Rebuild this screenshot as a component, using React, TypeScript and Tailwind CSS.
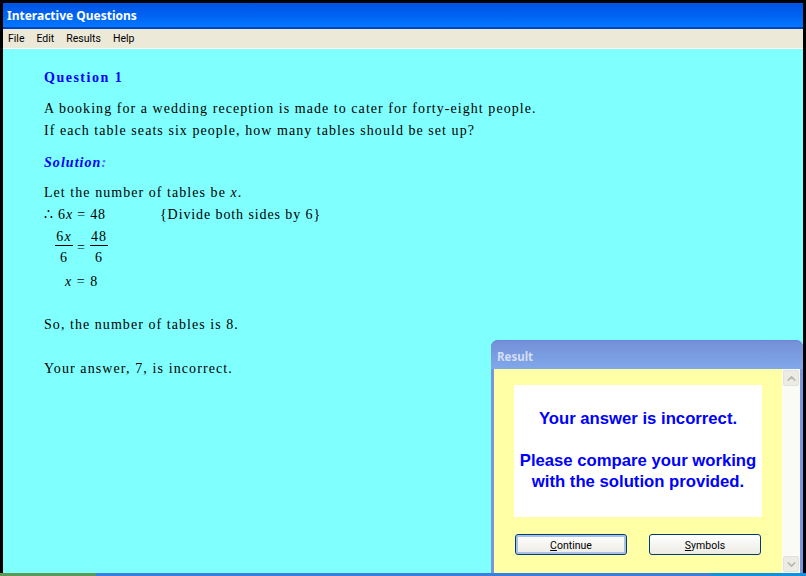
import React from "react";
import { ChevronUp, ChevronDown } from "lucide-react";

const serif = "font-['Liberation_Serif',serif]";
const ui = "font-['Roboto',sans-serif]";

const Fraction = ({ top, bottom }: { top: React.ReactNode; bottom: React.ReactNode }) => {
  return (
    <span className="flex w-[18px] flex-col items-center">
      <span className="flex h-[18px] items-center">{top}</span>
      <span className="h-px w-full bg-black"></span>
      <span className="flex h-[22px] items-center">{bottom}</span>
    </span>
  );
};

const ScrollButton = ({ children }: { children: React.ReactNode }) => {
  return (
    <div className="flex h-[16px] w-[16px] items-center justify-center rounded-[2px] border border-[#e2e2da] bg-[#ecece4] text-[#b8b8ae]">
      {children}
    </div>
  );
};

const DialogButton = ({ label, rest, focused }: { label: string; rest: string; focused?: boolean }) => {
  return (
    <button
      className={`flex h-[21px] w-[112px] items-center justify-center rounded-[3px] border border-[#003c74] bg-gradient-to-b from-white to-[#ecebe5] pt-[2px] text-[10.5px] text-black ${ui} ${focused ? "shadow-[inset_0_0_0_2px_#a9c1ea]" : ""}`}
    >
      <span className="underline">{label}</span>
      {rest}
    </button>
  );
};

const ResultDialog = () => {
  return (
    <div className="absolute left-[488px] top-[291px] flex h-[233px] w-[312px] flex-col rounded-t-[7px] bg-[#7b94dc] tracking-normal">
      <div className="flex h-[29px] items-center rounded-t-[7px] border-t border-[#6c86dc] bg-gradient-to-b from-[#7490d8] to-[#80a8ea] px-[6px] pt-[3px] font-['Noto_Sans',sans-serif] text-[11.5px] font-bold text-[#d4def6]">
        Result
      </div>
      <div className="ml-[3px] mr-[3px] flex flex-1 bg-[#ffffa6]">
        <div className="flex flex-1 flex-col items-center pt-[16px]">
          <div className="flex h-[132px] w-[248px] flex-col items-center justify-center bg-white pb-[2px] text-center font-['Liberation_Sans',sans-serif] text-[16.7px] font-bold leading-[21px] text-[#0000ff]">
            <p>Your answer is incorrect.</p>
            <p className="h-[21px]"></p>
            <p>Please compare your working</p>
            <p>with the solution provided.</p>
          </div>
          <div className="mt-[17px] flex w-[246px] justify-between">
            <DialogButton label="C" rest="ontinue" focused />
            <DialogButton label="S" rest="ymbols" />
          </div>
        </div>
        <div className="flex w-[18px] flex-col justify-between bg-[#fbfbf5] pb-[1px] pl-[1px] pt-[1px]">
          <ScrollButton><ChevronUp size={13} strokeWidth={3} /></ScrollButton>
          <ScrollButton><ChevronDown size={13} strokeWidth={3} /></ScrollButton>
        </div>
      </div>
    </div>
  );
};

const App = () => {
  return (
    <div className="flex h-[576px] w-[806px] flex-col overflow-hidden bg-black pl-[3px] pr-[3px] pt-[3px]">
      <div className="flex h-[26px] items-center border-b-2 border-[#0044c4] bg-gradient-to-b from-[#0054e3] via-[#0062f2] to-[#0078ff] px-[4px] pt-[1px] font-['Noto_Sans',sans-serif] text-[12px] font-bold text-white">
        Interactive Questions
      </div>
      <div className={`flex h-[19px] items-center gap-[12px] bg-[#ece9d8] px-[5px] pt-[1px] text-[10.5px] text-black ${ui}`}>
        <span>File</span>
        <span>Edit</span>
        <span>Results</span>
        <span>Help</span>
      </div>
      <div className="h-px bg-white"></div>
      <div className={`relative flex flex-1 flex-col bg-[#80ffff] pl-[41px] pt-[20px] text-[14px] tracking-[1.05px] text-black ${serif}`}>
        <p className="flex h-[16px] items-center font-bold tracking-[1.5px] text-[#0000ff]">Question 1</p>
        <p className="mt-[12px] flex h-[22px] items-center">A booking for a wedding reception is made to cater for forty-eight people.</p>
        <p className="flex h-[22px] items-center">If each table seats six people, how many tables should be set up?</p>
        <p className="mt-[10px] flex h-[22px] items-center font-bold italic text-[#0000ff]">Solution<span className="text-[#4c6cff]">:</span></p>
        <p className="mt-[8px] flex h-[22px] items-center whitespace-pre">Let the number of tables be <i>x</i>.</p>
        <div className="flex h-[22px] items-center whitespace-pre">
          <span className="w-[116px] tracking-[0.8px]">∴ 6<i>x</i> = 48</span>
          <span className="tracking-[0.9px]">{"{Divide both sides by 6}"}</span>
        </div>
        <div className="ml-[11px] mt-[2px] flex items-center gap-[4px]">
          <Fraction top={<span>6<i>x</i></span>} bottom="6" />
          <span>=</span>
          <Fraction top="48" bottom="6" />
        </div>
        <p className="ml-[21px] mt-[2px] flex h-[22px] items-center whitespace-pre"><i>x</i> = 8</p>
        <p className="mt-[21px] flex h-[22px] items-center">So, the number of tables is 8.</p>
        <p className="mt-[22px] flex h-[22px] items-center tracking-[1.1px]">Your answer, 7, is incorrect.</p>
        <ResultDialog />
      </div>
      <div className="-ml-[3px] -mr-[3px] flex h-[3px]">
        <div className="w-[96px] bg-[#5a9a56]"></div>
        <div className="w-[615px] bg-[#3a7fe0]"></div>
        <div className="flex-1 bg-[#1090e0]"></div>
      </div>
    </div>
  );
};

export default App;
